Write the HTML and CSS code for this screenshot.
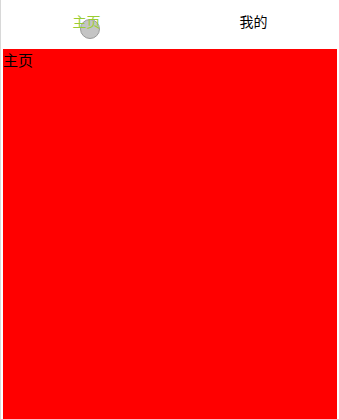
FILE: index.html
```html
<!DOCTYPE html>
<html lang="zh">
<head>
<meta charset="utf-8">
<link rel="stylesheet" href="styles.css">
</head>
<body>
<div class="page">
  <nav class="tabs">
    <div class="tab active"><span class="dot"></span><span class="label">主页</span></div>
    <div class="tab"><span class="label">我的</span></div>
  </nav>
  <main class="content">主页</main>
</div>
</body>
</html>
```
FILE: styles.css
```css
html, body {
  margin: 0;
  padding: 0;
  height: 100%;
  background: #fff;
}
.page {
  box-sizing: border-box;
  height: 100%;
  border-left: 1px solid #d8d8d8;
  padding: 0 2px 0 2px;
  display: flex;
  flex-direction: column;
  font-family: "Noto Sans CJK SC", "Liberation Sans", sans-serif;
  font-size: 14px;
}
.tabs {
  display: flex;
  height: 49px;
  flex: none;
}
.tab {
  flex: 1;
  position: relative;
  display: flex;
  justify-content: center;
  padding-top: 12px;
  line-height: 18px;
  color: #000;
}
.tab.active {
  color: #9acd32;
}
.label {
  position: relative;
}
.dot {
  position: absolute;
  left: 50%;
  top: 19px;
  width: 20px;
  height: 20px;
  margin-left: -7px;
  border-radius: 50%;
  background: #c4c4c4;
  border: 1px solid #9a9a9a;
  box-sizing: border-box;
}
.content {
  flex: 1;
  background: #ff0000;
  color: #000;
  font-size: 15px;
  line-height: 22px;
}
```
